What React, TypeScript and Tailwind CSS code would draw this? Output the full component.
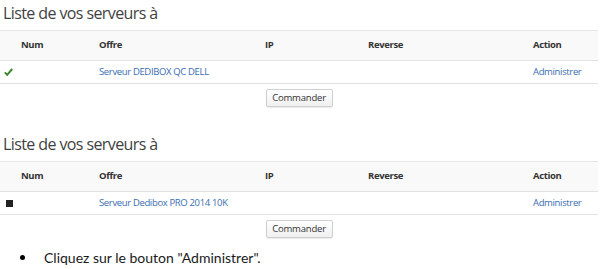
import React from 'react';

type Server = { status: 'ok' | 'off'; offer: string };

const blocks: Server[] = [
  { status: 'ok', offer: 'Serveur DEDIBOX QC DELL' },
  { status: 'off', offer: 'Serveur Dedibox PRO 2014 10K' },
];

const cols = 'grid grid-cols-[94px_166px_103px_165px_1fr]';

function CheckIcon() {
  return (
    <svg width="9" height="8" viewBox="0 0 9 8" className="block">
      <path d="M0.8 4.4 L3.2 6.8 L8.2 1" fill="none" stroke="#3c8a2e" strokeWidth="2" />
    </svg>
  );
}

function ServerBlock({ server }: { server: Server }) {
  return (
    <div>
      <h2 className="text-[16px] leading-[22px] tracking-[-0.6px] text-[#3f3f3f] pl-[3px]">Liste de vos serveurs à</h2>
      <div className="mt-[6px] w-[598px] border-t border-[#e6e6e6] tracking-[-0.35px]">
        <div className={`${cols} h-[30px] items-center bg-[#f9f9f9] border-b border-[#e2e2e2] text-[9.5px] font-bold text-[#333]`}>
          <span className="pl-[21px]">Num</span>
          <span className="pl-[5px]">Offre</span>
          <span className="pl-[5px]">IP</span>
          <span className="pl-[5px]">Reverse</span>
          <span className="pl-[5px]">Action</span>
        </div>
        <div className={`${cols} h-[23px] items-center border-b border-[#e2e2e2] text-[9.5px] text-[#3a6db0]`}>
          <span className="pl-[4px]">
            {server.status === 'ok' ? <CheckIcon /> : <span className="block w-[7px] h-[7px] bg-[#222] ml-[2px]" />}
          </span>
          <span className="pl-[5px]">{server.offer}</span>
          <span />
          <span />
          <span className="pl-[5px]">Administrer</span>
        </div>
      </div>
      <div className="flex justify-center w-[598px] mt-[5px]">
        <button className="w-[67px] h-[18px] rounded-[2px] border border-[#cfcfcf] bg-gradient-to-b from-white to-[#f0f0f0] text-[9.5px] tracking-[-0.2px] text-[#333] shadow-[0_1px_1px_rgba(0,0,0,0.08)]">
          Commander
        </button>
      </div>
    </div>
  );
}

export default function App() {
  return (
    <div className="w-[600px] h-[269px] bg-white overflow-hidden font-['Open_Sans',sans-serif]">
      <div className="pt-[2px]">
        <ServerBlock server={blocks[0]} />
      </div>
      <div className="mt-[26px]">
        <ServerBlock server={blocks[1]} />
      </div>
      <ul className="mt-[9px] pl-[20px] text-[14px] text-[#1a1a1a] font-['Lato',sans-serif]">
        <li className="flex items-center">
          <span className="w-[5px] h-[5px] rounded-full bg-black mr-[19px]" />
          Cliquez sur le bouton "Administrer".
        </li>
      </ul>
    </div>
  );
}
